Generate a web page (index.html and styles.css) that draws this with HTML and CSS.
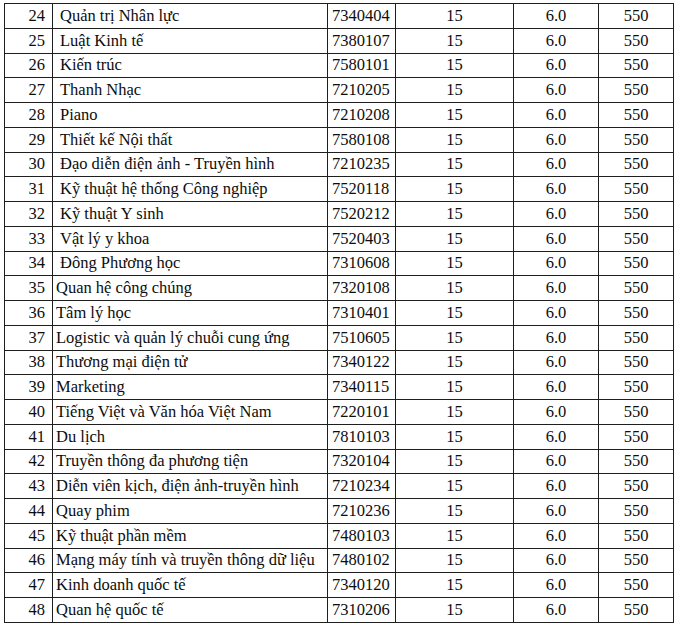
FILE: index.html
```html
<!DOCTYPE html>
<html lang="vi">
<head>
<meta charset="utf-8">
<link rel="stylesheet" href="styles.css">
</head>
<body>
<table class="grid">
<colgroup>
<col class="c-no"><col class="c-name"><col class="c-code"><col class="c-a"><col class="c-b"><col class="c-c">
</colgroup>
<tbody>
<tr><td class="no">24</td><td class="name ind">Quản trị Nhân lực</td><td class="code">7340404</td><td class="num">15</td><td class="num">6.0</td><td class="num">550</td></tr>
<tr><td class="no">25</td><td class="name ind">Luật Kinh tế</td><td class="code">7380107</td><td class="num">15</td><td class="num">6.0</td><td class="num">550</td></tr>
<tr><td class="no">26</td><td class="name ind">Kiến trúc</td><td class="code">7580101</td><td class="num">15</td><td class="num">6.0</td><td class="num">550</td></tr>
<tr><td class="no">27</td><td class="name ind">Thanh Nhạc</td><td class="code">7210205</td><td class="num">15</td><td class="num">6.0</td><td class="num">550</td></tr>
<tr><td class="no">28</td><td class="name ind">Piano</td><td class="code">7210208</td><td class="num">15</td><td class="num">6.0</td><td class="num">550</td></tr>
<tr><td class="no">29</td><td class="name ind">Thiết kế Nội thất</td><td class="code">7580108</td><td class="num">15</td><td class="num">6.0</td><td class="num">550</td></tr>
<tr><td class="no">30</td><td class="name ind">Đạo diễn điện ảnh - Truyền hình</td><td class="code">7210235</td><td class="num">15</td><td class="num">6.0</td><td class="num">550</td></tr>
<tr><td class="no">31</td><td class="name ind">Kỹ thuật hệ thống Công nghiệp</td><td class="code">7520118</td><td class="num">15</td><td class="num">6.0</td><td class="num">550</td></tr>
<tr><td class="no">32</td><td class="name ind">Kỹ thuật Y sinh</td><td class="code">7520212</td><td class="num">15</td><td class="num">6.0</td><td class="num">550</td></tr>
<tr><td class="no">33</td><td class="name ind">Vật lý y khoa</td><td class="code">7520403</td><td class="num">15</td><td class="num">6.0</td><td class="num">550</td></tr>
<tr><td class="no">34</td><td class="name ind">Đông Phương học</td><td class="code">7310608</td><td class="num">15</td><td class="num">6.0</td><td class="num">550</td></tr>
<tr><td class="no">35</td><td class="name">Quan hệ công chúng</td><td class="code">7320108</td><td class="num">15</td><td class="num">6.0</td><td class="num">550</td></tr>
<tr><td class="no">36</td><td class="name">Tâm lý học</td><td class="code">7310401</td><td class="num">15</td><td class="num">6.0</td><td class="num">550</td></tr>
<tr><td class="no">37</td><td class="name">Logistic và quản lý chuỗi cung ứng</td><td class="code">7510605</td><td class="num">15</td><td class="num">6.0</td><td class="num">550</td></tr>
<tr><td class="no">38</td><td class="name">Thương mại điện tử</td><td class="code">7340122</td><td class="num">15</td><td class="num">6.0</td><td class="num">550</td></tr>
<tr><td class="no">39</td><td class="name">Marketing</td><td class="code">7340115</td><td class="num">15</td><td class="num">6.0</td><td class="num">550</td></tr>
<tr><td class="no">40</td><td class="name">Tiếng Việt và Văn hóa Việt Nam</td><td class="code">7220101</td><td class="num">15</td><td class="num">6.0</td><td class="num">550</td></tr>
<tr><td class="no">41</td><td class="name">Du lịch</td><td class="code">7810103</td><td class="num">15</td><td class="num">6.0</td><td class="num">550</td></tr>
<tr><td class="no">42</td><td class="name">Truyền thông đa phương tiện</td><td class="code">7320104</td><td class="num">15</td><td class="num">6.0</td><td class="num">550</td></tr>
<tr><td class="no">43</td><td class="name">Diễn viên kịch, điện ảnh-truyền hình</td><td class="code">7210234</td><td class="num">15</td><td class="num">6.0</td><td class="num">550</td></tr>
<tr><td class="no">44</td><td class="name">Quay phim</td><td class="code">7210236</td><td class="num">15</td><td class="num">6.0</td><td class="num">550</td></tr>
<tr><td class="no">45</td><td class="name">Kỹ thuật phần mềm</td><td class="code">7480103</td><td class="num">15</td><td class="num">6.0</td><td class="num">550</td></tr>
<tr><td class="no">46</td><td class="name">Mạng máy tính và truyền thông dữ liệu</td><td class="code">7480102</td><td class="num">15</td><td class="num">6.0</td><td class="num">550</td></tr>
<tr><td class="no">47</td><td class="name">Kinh doanh quốc tế</td><td class="code">7340120</td><td class="num">15</td><td class="num">6.0</td><td class="num">550</td></tr>
<tr><td class="no">48</td><td class="name">Quan hệ quốc tế</td><td class="code">7310206</td><td class="num">15</td><td class="num">6.0</td><td class="num">550</td></tr>
</tbody>
</table>
</body>
</html>
```
FILE: styles.css
```css
html, body {
  margin: 0;
  padding: 0;
  background: #fff;
}
body {
  padding: 3px 0 0 4px;
  font-family: "Liberation Serif", "Times New Roman", serif;
  font-size: 16.5px;
  color: #0d0d0d;
}
.grid {
  border-collapse: collapse;
  table-layout: fixed;
  width: 670px;
  height: 620px;
}
.c-no { width: 48px; }
.c-name { width: 275px; }
.c-code { width: 68px; }
.c-a { width: 118px; }
.c-b { width: 85px; }
.c-c { width: 75px; }
.grid td {
  border: 1px solid #1f1f1f;
  padding: 0;
  line-height: 18px;
  white-space: nowrap;
  overflow: hidden;
  vertical-align: middle;
}
.grid td.no {
  text-align: right;
  padding-right: 7px;
}
.grid td.name {
  text-align: left;
  padding-left: 3px;
}
.grid td.name.ind {
  padding-left: 7px;
}
.grid td.code {
  text-align: left;
  padding-left: 4px;
}
.grid td.num {
  text-align: center;
}
```
